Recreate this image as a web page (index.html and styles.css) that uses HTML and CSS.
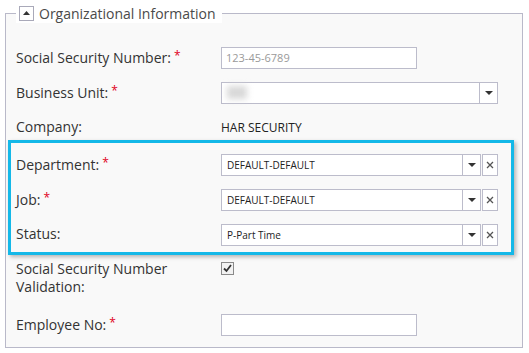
FILE: index.html
```html
<!DOCTYPE html>
<html lang="en">
<head>
  <meta charset="UTF-8" />
  <title>Organizational Information</title>
  <link rel="stylesheet" href="styles.css">
</head>
<body>

<fieldset class="panel">
  <legend class="panel-title">
    <span class="toggle"><svg width="7" height="4" viewBox="0 0 7 4"><path d="M0 4 L3.5 0 L7 4 Z" fill="#333"/></svg></span>
    Organizational Information
  </legend>

  <div class="rows">
    <div class="row">
      <label>Social Security Number:<span class="req">*</span></label>
      <div class="box text-box"><span class="placeholder">123-45-6789</span></div>
    </div>

    <div class="row">
      <label>Business Unit:<span class="req">*</span></label>
      <div class="box select wide">
        <span class="value"><span class="blurred"></span></span>
        <span class="arrow"><svg width="8" height="4" viewBox="0 0 8 4"><path d="M0 0 L8 0 L4 4 Z" fill="#333"/></svg></span>
      </div>
    </div>

    <div class="row">
      <label>Company:</label>
      <div class="static">HAR SECURITY</div>
    </div>

    <div class="focus">
      <div class="row">
        <label>Department:<span class="req">*</span></label>
        <div class="combo">
          <div class="box select">
            <span class="value">DEFAULT-DEFAULT</span>
            <span class="arrow"><svg width="8" height="4" viewBox="0 0 8 4"><path d="M0 0 L8 0 L4 4 Z" fill="#333"/></svg></span>
          </div>
          <span class="clear"><svg width="8" height="8" viewBox="0 0 8 8"><path d="M1 1 L7 7 M7 1 L1 7" stroke="#555" stroke-width="1.3"/></svg></span>
        </div>
      </div>

      <div class="row">
        <label>Job:<span class="req">*</span></label>
        <div class="combo">
          <div class="box select">
            <span class="value">DEFAULT-DEFAULT</span>
            <span class="arrow"><svg width="8" height="4" viewBox="0 0 8 4"><path d="M0 0 L8 0 L4 4 Z" fill="#333"/></svg></span>
          </div>
          <span class="clear"><svg width="8" height="8" viewBox="0 0 8 8"><path d="M1 1 L7 7 M7 1 L1 7" stroke="#555" stroke-width="1.3"/></svg></span>
        </div>
      </div>

      <div class="row">
        <label>Status:</label>
        <div class="combo">
          <div class="box select">
            <span class="value">P-Part Time</span>
            <span class="arrow"><svg width="8" height="4" viewBox="0 0 8 4"><path d="M0 0 L8 0 L4 4 Z" fill="#333"/></svg></span>
          </div>
          <span class="clear"><svg width="8" height="8" viewBox="0 0 8 8"><path d="M1 1 L7 7 M7 1 L1 7" stroke="#555" stroke-width="1.3"/></svg></span>
        </div>
      </div>
    </div>

    <div class="row row-top">
      <label>Social Security Number<br>Validation:</label>
      <span class="check"><svg width="11" height="11" viewBox="0 0 11 11"><path d="M2 5.5 L4.5 8 L9 2" fill="none" stroke="#333" stroke-width="1.8"/></svg></span>
    </div>

    <div class="row last">
      <label>Employee No:<span class="req">*</span></label>
      <div class="box text-box"></div>
    </div>
  </div>
</fieldset>

</body>
</html>
```

FILE: styles.css
```css
* { box-sizing: border-box; }
body {
  margin: 0;
  background: #fff;
  font-family: 'Open Sans', sans-serif;
  color: #333;
}

.panel {
  margin: 3px 0 0 5px;
  width: 518px;
  padding: 0 0 5px;
  border: 1px solid #b9b9c9;
  background: #f9f9f9;
}

.panel-title {
  display: flex;
  align-items: center;
  height: 20px;
  margin-left: 10px;
  padding: 0 6px 0 3px;
  background: #fff;
  font-size: 14px;
  color: #4a4a4a;
}

.toggle {
  width: 15px;
  height: 15px;
  margin-right: 5px;
  border: 1px solid #a9a9b9;
  background: #fff;
  display: flex;
  justify-content: center;
  align-items: center;
}

.rows {
  padding-top: 17px;
}

.row {
  display: grid;
  grid-template-columns: 205px 1fr;
  align-items: center;
  min-height: 35px;
  padding-left: 10px;
  font-size: 14px;
}

.row label {
  line-height: 18px;
  margin-top: -2px;
}

.req {
  color: #e0001b;
  font-size: 12px;
  margin-left: 3px;
  vertical-align: 3px;
}

.box {
  height: 22px;
  border: 1px solid #bcbccb;
  background: #fff;
  display: flex;
  align-items: center;
  font-size: 11px;
}

.text-box {
  width: 196px;
  padding-left: 4px;
}

.placeholder {
  color: #9a9a9a;
}

.select {
  width: 260px;
}

.select.wide {
  width: 277px;
}

.select .value {
  flex: 1;
  padding-left: 5px;
  font-size: 10px;
  color: #222;
}

.blurred {
  display: block;
  width: 20px;
  height: 13px;
  background: #d8d8d8;
  filter: blur(3px);
}

.select .arrow {
  width: 18px;
  height: 100%;
  border-left: 1px solid #bcbccb;
  display: flex;
  justify-content: center;
  align-items: center;
}

.combo {
  display: flex;
}

.clear {
  width: 16px;
  height: 22px;
  margin-left: 1px;
  border: 1px solid #bcbccb;
  background: #fff;
  display: flex;
  justify-content: center;
  align-items: center;
}

.static {
  font-size: 12px;
  color: #222;
}

.focus {
  margin: -5px 8px 0 2px;
  padding: 4px 0 0;
  border: 3px solid #14b8e8;
  box-shadow: 2px 2px 4px rgba(0, 0, 0, 0.28);
}

.focus .row {
  padding-left: 5px;
}

.row-top {
  align-items: start;
  margin-top: 5px;
}

.row-top label {
  margin-top: 0;
}

.check {
  width: 13px;
  height: 13px;
  margin-top: 2px;
  border: 1px solid #8a8a8a;
  background: #f2f2f2;
  display: flex;
  justify-content: center;
  align-items: center;
}

.last {
  margin-top: 11px;
}
```
